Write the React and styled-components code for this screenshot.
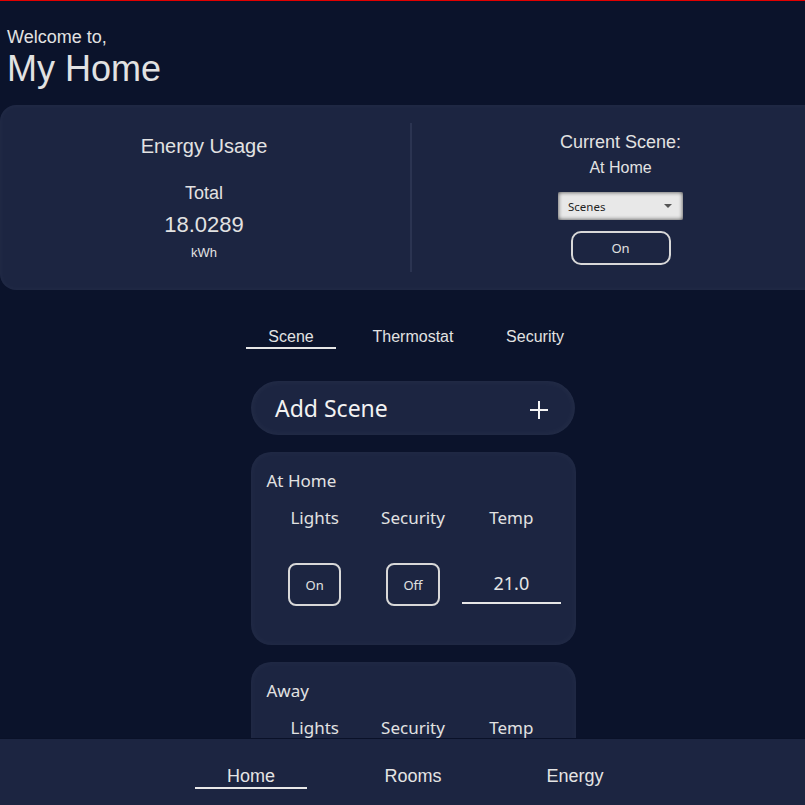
import styled, { createGlobalStyle } from "styled-components";

const GlobalStyle = createGlobalStyle`
  html, body {
    margin: 0;
    padding: 0;
    height: 100%;
    overflow: hidden;
    background: #0b132b;
  }
`;

const Page = styled.div`
  width: 826px;
  min-height: 100vh;
  border-top: 1px solid #e10000;
  color: #e2e2e2;
  font-family: "Liberation Sans", Arial, sans-serif;
`;

const Header = styled.header`
  padding: 27px 7px 0;
`;

const Welcome = styled.div`
  font-size: 18px;
  line-height: 1;
`;

const Title = styled.h1`
  margin: 5px 0 0;
  font-size: 36px;
  font-weight: 400;
  line-height: 1;
`;

const EnergyCard = styled.section`
  display: flex;
  align-items: flex-start;
  width: calc(100% + 3px);
  height: 185px;
  margin-top: 18px;
  background: #1c2541;
  border-radius: 16px;
  box-shadow: inset 0 0 6px rgba(255, 255, 255, 0.04);
`;

const Col = styled.div`
  display: flex;
  flex-direction: column;
  align-items: center;
  padding-top: ${(p) => p.$top}px;
  width: ${(p) => (p.$width ? p.$width + "px" : "auto")};
  flex: ${(p) => (p.$width ? "none" : 1)};
`;

const Divider = styled.div`
  align-self: stretch;
  width: 2px;
  margin: 18px 0 18px 2px;
  background: #2b3451;
`;

const Text = styled.div`
  font-size: ${(p) => p.$size}px;
  line-height: 1;
  margin-top: ${(p) => p.$mt || 0}px;
`;

const SelectWrap = styled.div`
  position: relative;
  margin-top: 16px;
`;

const SceneSelect = styled.select`
  appearance: none;
  width: 125px;
  height: 28px;
  padding: 0 10px;
  border: none;
  border-radius: 2px;
  background: #e8e8e8;
  box-shadow: inset 0 0 4px rgba(0, 0, 0, 0.75);
  color: #222;
  font-family: "Noto Sans", sans-serif;
  font-size: 11.5px;
  outline: none;
`;

const Caret = styled.svg`
  position: absolute;
  right: 11px;
  top: 12px;
  pointer-events: none;
`;

const OutlineButton = styled.button`
  box-sizing: border-box;
  width: ${(p) => p.$w}px;
  height: ${(p) => p.$h}px;
  margin-top: ${(p) => p.$mt || 0}px;
  border: 2px solid #d8d8d8;
  border-radius: ${(p) => p.$r}px;
  background: transparent;
  color: #e2e2e2;
  font-family: "Noto Sans", sans-serif;
  font-size: 13px;
  padding: 0;
  cursor: pointer;
`;

const Tabs = styled.nav`
  display: grid;
  grid-template-columns: repeat(3, 122px);
  justify-content: center;
  justify-items: center;
  margin-top: 39px;
`;

const Tab = styled.button`
  width: 90px;
  padding: 0 0 2px;
  border: none;
  border-bottom: 2px solid ${(p) => (p.$active ? "#e6e6e6" : "transparent")};
  background: none;
  color: #e2e2e2;
  font-family: "Liberation Sans", Arial, sans-serif;
  font-size: 16px;
  line-height: 1;
  white-space: nowrap;
  display: flex;
  justify-content: center;
`;

const AddScene = styled.button`
  display: flex;
  align-items: center;
  justify-content: space-between;
  box-sizing: border-box;
  width: 324px;
  height: 54px;
  margin: 32px auto 0;
  padding: 0 27px 0 24px;
  border: none;
  border-radius: 27px;
  background: #1c2541;
  box-shadow: inset 0 0 8px rgba(255, 255, 255, 0.05);
  color: #f2f2f2;
  font-family: "Noto Sans", sans-serif;
  font-size: 23px;
  line-height: 1;
`;

const SceneCard = styled.article`
  box-sizing: border-box;
  width: 325px;
  margin: 17px auto 0;
  padding: 20px 15px 39px;
  border-radius: 20px;
  background: #1c2541;
  box-shadow: inset 0 0 8px rgba(255, 255, 255, 0.04);
  font-family: "Noto Sans", sans-serif;
`;

const CardTitle = styled.div`
  padding-left: 1px;
  font-size: 17px;
  line-height: 1;
`;

const SettingsGrid = styled.div`
  display: grid;
  grid-template-columns: repeat(3, 1fr);
  justify-items: center;
  align-items: start;
  row-gap: 37px;
  margin-top: 20px;
`;

const Label = styled.div`
  font-size: 17px;
  line-height: 1;
`;

const TempInput = styled.input`
  box-sizing: border-box;
  width: 100%;
  height: 41px;
  padding: 0;
  border: none;
  border-bottom: 2px solid #e6e6e6;
  background: transparent;
  color: #e6e6e6;
  font-family: "Noto Sans", sans-serif;
  font-size: 18px;
  text-align: center;
  outline: none;
`;

const BottomNav = styled.nav`
  position: fixed;
  left: 0;
  bottom: 0;
  box-sizing: border-box;
  width: 826px;
  height: 67px;
  padding-top: 28px;
  border-top: 1px solid #0a1128;
  background: #1c2541;
  display: grid;
  grid-template-columns: repeat(3, 162px);
  justify-content: center;
  justify-items: center;
  align-items: start;
`;

const NavLink = styled.button`
  width: 112px;
  padding: 0 0 2px;
  border: none;
  border-bottom: 2px solid ${(p) => (p.$active ? "#e8e8e8" : "transparent")};
  background: none;
  color: #e4e4e4;
  font-family: "Liberation Sans", Arial, sans-serif;
  font-size: 18px;
  line-height: 1;
  display: flex;
  justify-content: center;
`;

const scenes = [
  { name: "At Home", lights: "On", security: "Off", temp: "21.0" },
  { name: "Away", lights: "Off", security: "On", temp: "18.0" },
];

function Scene({ scene }) {
  return (
    <SceneCard>
      <CardTitle>{scene.name}</CardTitle>
      <SettingsGrid>
        <Label>Lights</Label>
        <Label>Security</Label>
        <Label>Temp</Label>
        <OutlineButton $w={53} $h={43} $r={8}>{scene.lights}</OutlineButton>
        <OutlineButton $w={54} $h={43} $r={8}>{scene.security}</OutlineButton>
        <TempInput defaultValue={scene.temp} />
      </SettingsGrid>
    </SceneCard>
  );
}

export default function App() {
  return (
    <>
      <GlobalStyle />
      <Page>
        <Header>
          <Welcome>Welcome to,</Welcome>
          <Title>My Home</Title>
        </Header>

        <EnergyCard>
          <Col $width={408} $top={31}>
            <Text $size={20}>Energy Usage</Text>
            <Text $size={18} $mt={28}>Total</Text>
            <Text $size={22} $mt={12}>18.0289</Text>
            <Text $size={13} $mt={10}>kWh</Text>
          </Col>
          <Divider />
          <Col $top={28}>
            <Text $size={18}>Current Scene:</Text>
            <Text $size={16} $mt={9}>At Home</Text>
            <SelectWrap>
              <SceneSelect defaultValue="">
                <option value="">Scenes</option>
                <option>At Home</option>
                <option>Away</option>
              </SceneSelect>
              <Caret width="8" height="4" viewBox="0 0 8 4">
                <path d="M0 0h8L4 4z" fill="#555" />
              </Caret>
            </SelectWrap>
            <OutlineButton $w={100} $h={34} $r={10} $mt={11}>On</OutlineButton>
          </Col>
        </EnergyCard>

        <Tabs>
          <Tab $active>Scene</Tab>
          <Tab>Thermostat</Tab>
          <Tab>Security</Tab>
        </Tabs>

        <AddScene>
          <span>Add Scene</span>
          <svg width="18" height="18" viewBox="0 0 18 18" style={{ marginTop: 3 }}>
            <path d="M9 0v18M0 9h18" stroke="#f4f4f4" strokeWidth="2" />
          </svg>
        </AddScene>

        {scenes.map((s) => (
          <Scene key={s.name} scene={s} />
        ))}
      </Page>

      <BottomNav>
        <NavLink $active>Home</NavLink>
        <NavLink>Rooms</NavLink>
        <NavLink>Energy</NavLink>
      </BottomNav>
    </>
  );
}
